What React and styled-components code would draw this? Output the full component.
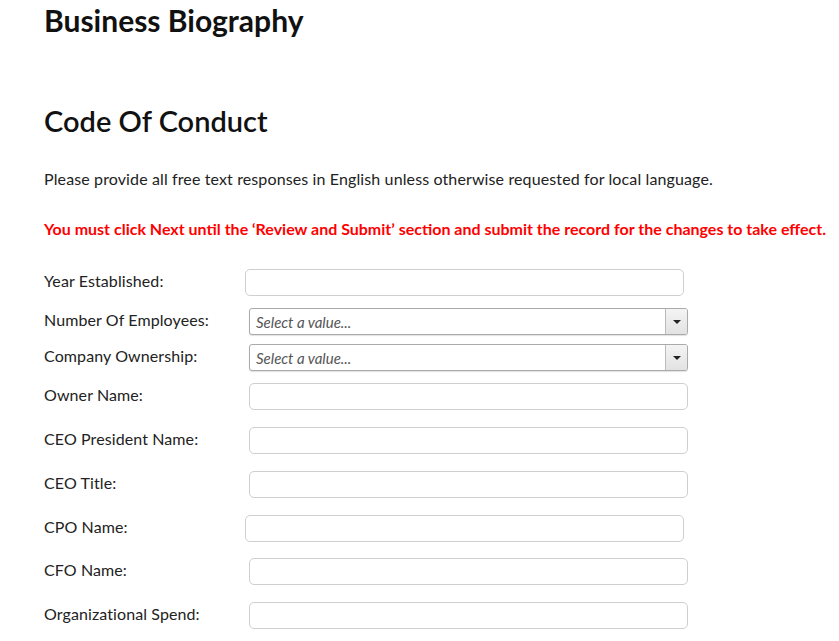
import React from "react";
import styled, { createGlobalStyle } from "styled-components";

const Global = createGlobalStyle`
  html, body { margin: 0; padding: 0; background: #fff; }
  body { font-family: Lato, "Open Sans", sans-serif; color: #222; }
`;

const Page = styled.div`
  padding: 0 0 0 44px;
  width: 839px;
  box-sizing: border-box;
`;

const Title = styled.h1`
  margin: ${(p) => p.$mt}px 0 0;
  font-family: Lato, sans-serif;
  font-weight: ${(p) => p.$weight || 700};
  font-size: ${(p) => p.$size || 30}px;
  line-height: 36px;
  color: #111;
`;

const Intro = styled.p`
  margin: 30px 0 0;
  font-size: 16px;
  letter-spacing: 0.12px;
  line-height: 20px;
  color: #222;
`;

const Warning = styled.p`
  margin: 30px 0 0;
  font-size: 16px;
  line-height: 20px;
  font-weight: 700;
  color: #ff0000;
  white-space: nowrap;
`;

const Form = styled.div`
  display: flex;
  flex-direction: column;
  margin-top: 30px;
`;

const Row = styled.div`
  display: flex;
  align-items: center;
  height: 27px;
  margin-top: ${(p) => p.$mt}px;
`;

const Label = styled.label`
  width: 205px;
  flex: none;
  padding-bottom: 4px;
  font-size: 16px;
  letter-spacing: 0.1px;
  color: #222;
`;

const TextInput = styled.input`
  box-sizing: border-box;
  width: 439px;
  height: 27px;
  margin-left: ${(p) => p.$shift || 0}px;
  border: 1px solid #cfcfcf;
  border-radius: 5px;
  background: #fff;
  padding: 0 6px;
  font-family: Lato, sans-serif;
  font-size: 15px;
  outline: none;
`;

const Select = styled.div`
  box-sizing: border-box;
  width: 439px;
  height: 27px;
  display: flex;
  align-items: stretch;
  border: 1px solid #aaa;
  border-radius: 3px;
  background: #fff;
  box-shadow: 0 1px 1px rgba(0, 0, 0, 0.12);
  overflow: hidden;
`;

const Placeholder = styled.span`
  flex: 1;
  display: flex;
  align-items: center;
  padding-left: 6px;
  font-size: 15px;
  font-style: italic;
  color: #555;
`;

const ArrowBox = styled.span`
  width: 21px;
  flex: none;
  border-left: 1px solid #bbb;
  background: linear-gradient(#f4f4f4, #e2e2e2);
  display: flex;
  align-items: center;
  justify-content: center;
`;

const Caret = styled.span`
  width: 0;
  height: 0;
  border-left: 4px solid transparent;
  border-right: 4px solid transparent;
  border-top: 4px solid #222;
`;

const DropDown = () => (
  <Select>
    <Placeholder>Select a value...</Placeholder>
    <ArrowBox>
      <Caret />
    </ArrowBox>
  </Select>
);

const rows = [
  { label: "Year Established:", type: "text", mt: 0, shift: -4 },
  { label: "Number Of Employees:", type: "select", mt: 12 },
  { label: "Company Ownership:", type: "select", mt: 9 },
  { label: "Owner Name:", type: "text", mt: 12 },
  { label: "CEO President Name:", type: "text", mt: 17 },
  { label: "CEO Title:", type: "text", mt: 17 },
  { label: "CPO Name:", type: "text", mt: 17, shift: -4 },
  { label: "CFO Name:", type: "text", mt: 16 },
  { label: "Organizational Spend:", type: "text", mt: 17 },
];

export default function App() {
  return (
    <>
      <Global />
      <Page>
        <Title $mt={2}>Business Biography</Title>
        <Title $mt={65} $weight={600} $size={29}>Code Of Conduct</Title>
        <Intro>Please provide all free text responses in English unless otherwise requested for local language.</Intro>
        <Warning>
          You must click Next until the ‘Review and Submit’ section and submit the record for the changes to take effect.
        </Warning>
        <Form>
          {rows.map((r) => (
            <Row key={r.label} $mt={r.mt}>
              <Label>{r.label}</Label>
              {r.type === "select" ? <DropDown /> : <TextInput $shift={r.shift} />}
            </Row>
          ))}
        </Form>
      </Page>
    </>
  );
}
